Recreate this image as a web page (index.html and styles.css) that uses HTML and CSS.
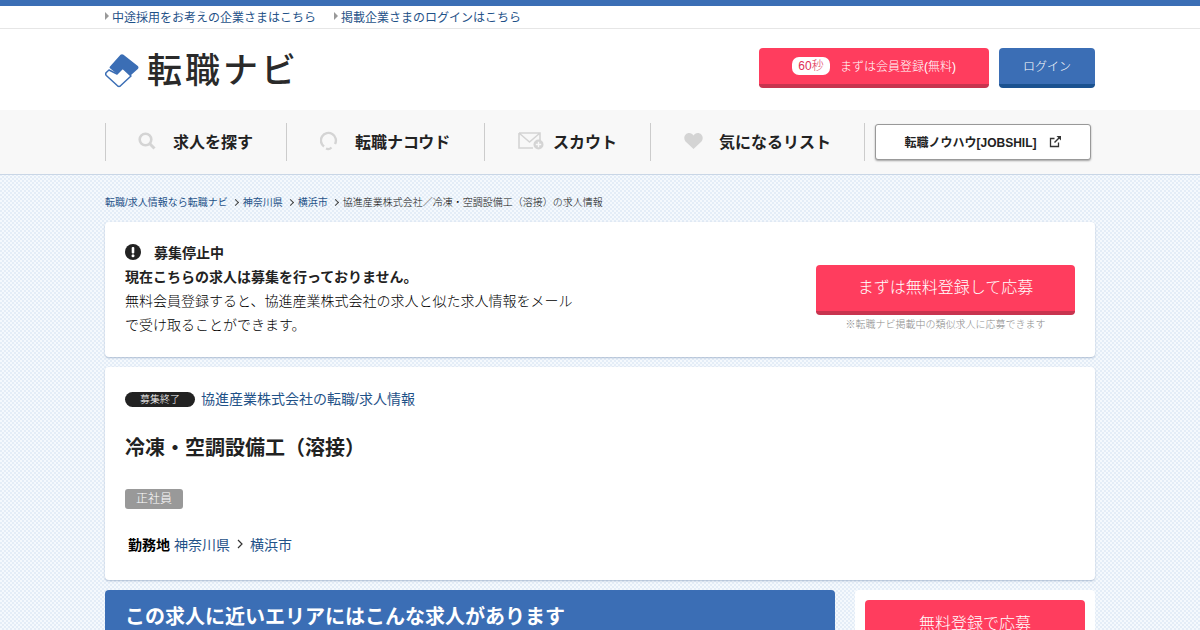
FILE: index.html
```html
<!DOCTYPE html>
<html lang="ja">
<head>
<meta charset="utf-8">
<title>転職ナビ</title>
<link rel="stylesheet" href="styles.css">
</head>
<body>
<div class="toplinks">
  <div class="wrap toplinks-in">
    <a class="toplink">中途採用をお考えの企業さまはこちら</a>
    <a class="toplink">掲載企業さまのログインはこちら</a>
  </div>
</div>
<header class="header">
  <div class="wrap header-in">
    <div class="logo">
      <svg class="logo-mark" width="34" height="34" viewBox="0 0 34 34">
        <path d="M4 16 L1.3 18.5 Q0 20 1.3 21.5 L12.5 31.8 Q14 33 15.5 31.8 L26 22 L17.7 14.3 L12 20 Z" fill="#fff" stroke="#3b6eb5" stroke-width="1.5" stroke-linejoin="round"/>
        <path d="M15.5 0.8 Q17 -0.3 18.5 0.8 L32.8 12 Q34.2 13.5 32.8 15 L25.5 21.5 L17.7 14.3 L12 20 L5 14.3 Q4.2 13.5 5 12.5 Z" fill="#3b6eb5"/>
      </svg>
      <span class="logo-text">転職ナビ</span>
    </div>
    <div class="head-btns">
      <a class="btn-reg"><span class="sec">60秒</span>まずは会員登録(無料)</a>
      <a class="btn-login">ログイン</a>
    </div>
  </div>
</header>
<nav class="nav">
  <div class="wrap nav-in">
    <a class="nav-item ni1">
      <svg width="18" height="18" viewBox="0 0 18 18"><circle cx="7.5" cy="7.5" r="5.8" fill="none" stroke="#d4d4d4" stroke-width="2.6"/><path d="M11.8 11.8 L16.5 16.5" stroke="#d4d4d4" stroke-width="3"/></svg>
      <span>求人を探す</span>
    </a>
    <a class="nav-item ni2">
      <svg width="18" height="20" viewBox="0 0 18 20"><path d="M4 15.5 A7.5 7.5 0 1 1 15 13" fill="none" stroke="#d4d4d4" stroke-width="2.4"/><path d="M6 17.5 Q9 19 11.5 16.5" fill="none" stroke="#d4d4d4" stroke-width="2.2"/></svg>
      <span>転職ナコウド</span>
    </a>
    <a class="nav-item ni3">
      <svg width="26" height="18" viewBox="0 0 26 18"><path d="M1 1 H22 V9 M1 1 V16 H15 M1 1 L11.5 10 L22 1" fill="none" stroke="#d4d4d4" stroke-width="1.6"/><circle cx="20.5" cy="12.5" r="5" fill="#d4d4d4"/><path d="M20.5 9.8 V15.2 M17.8 12.5 H23.2" stroke="#f8f8f8" stroke-width="1.4"/></svg>
      <span>スカウト</span>
    </a>
    <a class="nav-item ni4">
      <svg width="19" height="16" viewBox="0 0 19 16"><path d="M9.5 16 L1.5 8.5 C-1.5 4.5 1.5 0 5.2 0 C7 0 8.6 1 9.5 2.5 C10.4 1 12 0 13.8 0 C17.5 0 20.5 4.5 17.5 8.5 Z" fill="#d4d4d4"/></svg>
      <span>気になるリスト</span>
    </a>
    <a class="nav-ext">転職ノウハウ[JOBSHIL]
      <svg width="13" height="13" viewBox="0 0 13 13"><path d="M9.5 7.5 V11.5 H1.5 V3.5 H5.5" fill="none" stroke="#333" stroke-width="1.3"/><path d="M5.5 7.5 L11 2" stroke="#333" stroke-width="1.4"/><path d="M7.5 1 H12 V5.5 Z" fill="#333"/></svg>
    </a>
  </div>
</nav>
<main class="wrap main">
  <ol class="crumbs">
    <li><a>転職/求人情報なら転職ナビ</a></li>
    <li><a>神奈川県</a></li>
    <li><a>横浜市</a></li>
    <li class="cur">協進産業株式会社／冷凍・空調設備工（溶接）の求人情報</li>
  </ol>
  <section class="card stop">
    <div class="stop-text">
      <p class="stop-head"><svg width="16" height="16" viewBox="0 0 16 16"><circle cx="8" cy="8" r="8" fill="#222"/><rect x="6.7" y="3" width="2.6" height="6.4" rx="1" fill="#fff"/><circle cx="8" cy="11.7" r="1.5" fill="#fff"/></svg><span>募集停止中</span></p>
      <p class="stop-strong">現在こちらの求人は募集を行っておりません。</p>
      <p class="stop-body">無料会員登録すると、協進産業株式会社の求人と似た求人情報をメールで受け取ることができます。</p>
    </div>
    <div class="stop-cta">
      <a class="btn-apply">まずは無料登録して応募</a>
      <p class="note">※転職ナビ掲載中の類似求人に応募できます</p>
    </div>
  </section>
  <section class="card job">
    <div class="job-top"><span class="ended">募集終了</span><a class="link">協進産業株式会社の転職/求人情報</a></div>
    <h1 class="job-title">冷凍・空調設備工（溶接）</h1>
    <span class="tag">正社員</span>
    <p class="place"><b>勤務地</b><a class="link">神奈川県</a><svg width="8" height="10" viewBox="0 0 8 10"><path d="M2 1 L6 5 L2 9" fill="none" stroke="#333" stroke-width="1.2"/></svg><a class="link">横浜市</a></p>
  </section>
  <div class="lower">
    <h2 class="near">この求人に近いエリアにはこんな求人があります</h2>
    <aside class="side"><a class="btn-side">無料登録で応募</a></aside>
  </div>
</main>
</body>
</html>
```
FILE: styles.css
```css
* { box-sizing: border-box; }
html, body { margin: 0; padding: 0; height: 630px; overflow: hidden; }
body {
  font-family: "Liberation Sans", "Noto Sans CJK JP", sans-serif;
  font-weight: 300;
  color: #000;
  background-color: #f5f9fd;
  background-image: conic-gradient(#e4edf7 25%, transparent 0 50%, #e4edf7 0 75%, transparent 0);
  background-size: 4px 4px;
}
a { color: inherit; text-decoration: none; }
p, h1, h2, ol { margin: 0; padding: 0; }
.wrap { width: 990px; margin: 0 auto; }

.toplinks { height: 29px; background: #fff; border-top: 6px solid #3b6eb5; border-bottom: 1px solid #e6e6e6; }
.toplinks-in { display: flex; gap: 18px; height: 21px; align-items: center; }
.toplink { font-size: 12px; font-weight: 400; color: #1f5288; padding-left: 7px; position: relative; }
.toplink::before { content: ""; position: absolute; left: 0; top: 4px; border-left: 4px solid #999; border-top: 4px solid transparent; border-bottom: 4px solid transparent; }

.header { background: #fff; height: 81px; }
.header-in { display: flex; justify-content: space-between; align-items: flex-start; }
.logo { display: flex; align-items: center; gap: 8px; padding-top: 25px; }
.logo-mark { flex: none; }
.logo-text { font-size: 35px; line-height: 34px; font-weight: 500; letter-spacing: 3px; color: #2a2a2a; }
.head-btns { display: flex; gap: 10px; padding-top: 19px; }
.btn-reg { width: 230px; height: 40px; padding-bottom: 1px; background: #ff3d5e; border-bottom: 4px solid #c8344f; border-radius: 4px; color: #fff; font-size: 12px; display: flex; align-items: center; justify-content: center; }
.sec { background: #fff; color: #e02f55; border-radius: 7px; width: 38px; height: 18px; line-height: 18px; text-align: center; margin-right: 10px; }
.btn-login { width: 96px; height: 40px; padding-bottom: 1px; background: #3b6eb5; border-bottom: 4px solid #1b5290; border-radius: 4px; color: #fff; font-size: 12px; display: flex; align-items: center; justify-content: center; }

.nav { height: 65px; background: #f8f8f8; border-bottom: 1px solid #c9d6e6; }
.nav-in { display: flex; align-items: center; height: 64px; }
.nav-item { height: 38px; border-left: 1px solid #ccc; display: flex; align-items: center; font-size: 16px; font-weight: 700; color: #222; padding-bottom: 2px; }
.nav-item svg { flex: none; }
.ni1 { width: 181px; padding-left: 32px; gap: 17px; }
.ni2 { width: 198px; padding-left: 33px; gap: 17px; }
.ni3 { width: 166px; padding-left: 33px; gap: 9px; }
.ni4 { width: 215px; padding-left: 33px; gap: 16px; border-right: 1px solid #ccc; }
.nav-ext { margin-left: 10px; width: 216px; height: 36px; background: #fff; border: 1px solid #999; border-radius: 3px; box-shadow: 0 1px 2px rgba(0,0,0,.35); font-size: 12px; font-weight: 700; display: flex; align-items: center; justify-content: center; gap: 12px; color: #222; padding-bottom: 2px; }

.crumbs { list-style: none; display: flex; height: 47px; padding-top: 20px; font-size: 10px; line-height: 15px; color: #111; }
.crumbs a { color: #1f5288; font-weight: 400; }
.crumbs li + li { padding-left: 15px; position: relative; }
.crumbs li + li::before { content: ""; position: absolute; left: 5px; top: 5px; width: 4px; height: 4px; border-top: 1px solid #444; border-right: 1px solid #444; transform: rotate(45deg); }

.card { background: #fff; border-radius: 4px; box-shadow: 0 1px 2px rgba(90,120,160,.45); }
.stop { height: 135px; padding: 19px 20px 0; display: flex; justify-content: space-between; }
.stop-text { width: 450px; font-size: 14px; line-height: 24px; }
.stop-head { font-weight: 700; color: #222; display: flex; align-items: center; gap: 13px; height: 24px; }
.stop-head svg { margin-top: -3px; }
.stop-strong { font-weight: 700; color: #222; }
.stop-cta { width: 259px; padding-top: 24px; text-align: center; }
.btn-apply { display: block; height: 50px; line-height: 45px; background: #ff3d5e; border-bottom: 4px solid #c8344f; border-radius: 4px; color: #fff; font-size: 16px; }
.note { font-size: 10px; line-height: 15px; color: #8c8c8c; margin-top: 2px; }

.job { height: 213px; margin-top: 10px; padding: 19px 20px 0; }
.job-top { display: flex; align-items: center; gap: 6px; height: 24px; font-size: 14px; }
.link { color: #1f5288; font-weight: 400; }
.ended { width: 70px; height: 15px; line-height: 15px; border-radius: 8px; background: #222; color: #fff; font-size: 10px; text-align: center; margin-top: 3px; }
.job-title { font-size: 20px; line-height: 30px; font-weight: 700; color: #222; margin-top: 23px; }
.tag { display: block; width: 58px; height: 20px; line-height: 20px; margin-top: 26px; background: #999; color: #fff; border-radius: 3px; font-size: 12px; text-align: center; }
.place { display: flex; align-items: center; height: 24px; margin-top: 23px; padding-left: 3px; font-size: 14px; }
.place b { margin-right: 4px; font-weight: 700; }
.place svg { margin: 0 6px; }

.lower { display: flex; justify-content: space-between; margin-top: 10px; }
.near { width: 730px; height: 60px; background: #3b6eb5; color: #fff; font-size: 20px; font-weight: 700; line-height: 54px; padding-left: 20px; border-radius: 4px 4px 0 0; }
.side { width: 240px; height: 60px; background: #fff; border-radius: 4px; padding: 10px; }
.btn-side { display: block; height: 60px; background: #ff3d5e; border-radius: 4px; color: #fff; font-size: 16px; text-align: center; line-height: 47px; }
```
